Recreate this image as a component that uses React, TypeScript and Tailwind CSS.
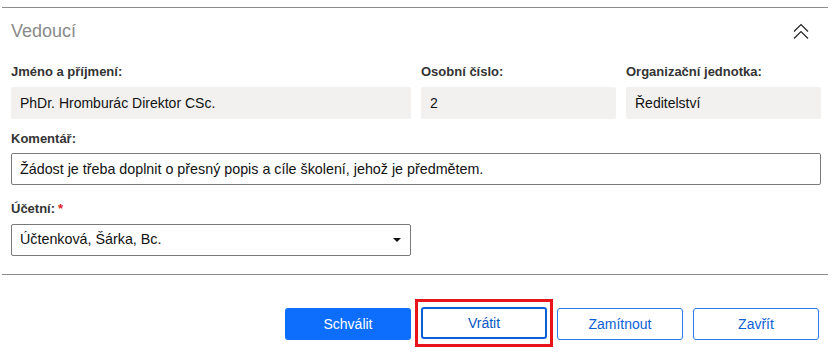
const font = { fontFamily: '"Liberation Sans", Arial, sans-serif' };

function Label({ children, required }: { children: React.ReactNode; required?: boolean }) {
  return (
    <div className="h-[16px] leading-[16px] text-[13px] font-bold text-[#333]">
      {children}
      {required && <span className="ml-[3px] text-[#e0201b]">*</span>}
    </div>
  );
}

function ReadOnly({ value }: { value: string }) {
  return (
    <div className="mt-[7px] h-[32px] rounded-[2px] bg-[#f2f1f0] px-[9px] text-[14px] leading-[32px] text-[#111]">
      {value}
    </div>
  );
}

function ChevronsUpIcon() {
  return (
    <svg width="16" height="17" viewBox="0 0 16 17" fill="none" stroke="#222" strokeWidth="1.2" className="mr-[12px]">
      <path d="M1 8.5 8 1.5 15 8.5" />
      <path d="M1 15.5 8 8.5 15 15.5" />
    </svg>
  );
}

export default function App() {
  return (
    <div className="h-[357px] w-[834px] bg-white" style={font}>
      <div className="ml-[2px] w-[826px] pt-[7px]">
        <div className="border-t border-[#8c8c8c] pl-[9px] pr-[7px]">
          <div className="flex h-[47px] items-center justify-between">
            <h2 className="text-[18px] text-[#8a8a8a]">Vedoucí</h2>
            <ChevronsUpIcon />
          </div>

          <div className="mt-[9px] grid grid-cols-[400px_195px_195px] gap-x-[10px]">
            <div>
              <Label>Jméno a příjmení:</Label>
              <ReadOnly value="PhDr. Hromburác Direktor CSc." />
            </div>
            <div>
              <Label>Osobní číslo:</Label>
              <ReadOnly value="2" />
            </div>
            <div>
              <Label>Organizační jednotka:</Label>
              <ReadOnly value="Ředitelství" />
            </div>
          </div>

          <div className="mt-[12px]">
            <Label>Komentář:</Label>
            <div className="mt-[6px] h-[32px] w-[810px] rounded-[2px] border border-[#7a7a7a] px-[8px] text-[14.3px] leading-[30px] text-[#111]">
              Žádost je třeba doplnit o přesný popis a cíle školení, jehož je předmětem.
            </div>
          </div>

          <div className="mt-[16px]">
            <Label required>Účetní:</Label>
            <div className="mt-[7px] flex h-[32px] w-[400px] items-center justify-between rounded-[2px] border border-[#7a7a7a] pl-[8px] pr-[9px] text-[14.3px] text-[#111]">
              <span>Účtenková, Šárka, Bc.</span>
              <span className="h-0 w-0 border-x-[4px] border-t-[4px] border-x-transparent border-t-[#111]" />
            </div>
          </div>
        </div>

        <div className="mt-[18px] border-t border-[#8c8c8c] pl-[9px] pr-[9px]">
          <div className="mt-[33px] flex items-start justify-end gap-[10px] text-[14px]">
            <button className="h-[32px] w-[126px] rounded-[3px] bg-[#0d6efd] text-white">Schválit</button>
            <div className="-mx-[6px] -mb-[7px] -mt-[9px] border-[3px] border-[#e8141b] px-[3px] py-[5px]">
              <button className="block h-[32px] w-[126px] rounded-[3px] border-[2px] border-[#0b5ed7] text-[#0a56c4]">Vrátit</button>
            </div>
            <button className="h-[32px] w-[126px] rounded-[3px] border border-[#2b7bf0] text-[#0d5fd6]">Zamítnout</button>
            <button className="h-[32px] w-[126px] rounded-[3px] border border-[#2b7bf0] text-[#0d5fd6]">Zavřít</button>
          </div>
        </div>
      </div>
    </div>
  );
}
